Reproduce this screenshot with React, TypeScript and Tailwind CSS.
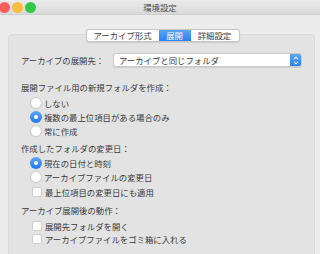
import React from 'react';

const Radio = ({ checked, label }: { checked?: boolean; label: string }) => (
  <div className="flex items-center h-[14px] pl-[9px]">
    {checked ? (
      <div className="w-[12px] h-[12px] rounded-full bg-gradient-to-b from-[#5aa6fa] to-[#1f78f0] flex items-center justify-center">
        <div className="w-[4px] h-[4px] rounded-full bg-white" />
      </div>
    ) : (
      <div className="w-[12px] h-[12px] rounded-full bg-white border border-[#cdcdcd] shadow-[0_0.5px_0.5px_rgba(0,0,0,0.08)]" />
    )}
    <span className="ml-[2px]">{label}</span>
  </div>
);

const Check = ({ label }: { label: string }) => (
  <div className="flex items-center h-[14px] pl-[11px]">
    <div className="w-[10px] h-[10px] rounded-[2px] bg-white border border-[#cdcdcd]" />
    <span className="ml-[3px]">{label}</span>
  </div>
);

export default function App() {
  return (
    <div className="w-[320px] h-[254px] overflow-hidden bg-[#ececec] text-[#3a3a3a] text-[8.4px] leading-[14px] font-['Noto_Sans_CJK_JP','Noto_Sans',sans-serif]">
      {/* title bar */}
      <div className="relative h-[15px] bg-gradient-to-b from-[#ebebeb] to-[#d9d9d9] border-b border-[#cfcfcf] flex items-center">
        <div className="flex items-center gap-[2px] -ml-[1px]">
          <div className="w-[11px] h-[11px] rounded-full bg-[#fc605c]" />
          <div className="w-[11px] h-[11px] rounded-full bg-[#fdbc40]" />
          <div className="w-[11px] h-[11px] rounded-full bg-[#34c84a]" />
        </div>
        <div className="absolute inset-0 flex items-center justify-center text-[#4d4d4d]">環境設定</div>
      </div>

      {/* tabs */}
      <div className="relative z-10 flex justify-center mt-[14px] -mb-[8px] pl-[5px]">
        <div className="flex h-[13px] rounded-[3px] border border-[#c6c6c6] bg-white shadow-[0_0.5px_1px_rgba(0,0,0,0.1)] overflow-hidden leading-[11px]">
          <div className="w-[72px] flex items-center justify-center">アーカイブ形式</div>
          <div className="w-[32px] flex items-center justify-center text-white bg-gradient-to-b from-[#5aa6fa] to-[#2b7ff2]">展開</div>
          <div className="w-[48px] flex items-center justify-center">詳細設定</div>
        </div>
      </div>

      {/* group box */}
      <div className="ml-[8px] mr-[5px] h-[240px] bg-[#e3e3e3] border border-[#dadada] rounded-[4px] pl-[12px] pt-[18px]">
        <div className="flex items-center h-[14px]">
          <span className="w-[92px]">アーカイブの展開先：</span>
          <div className="flex items-center w-[189px] h-[14px] bg-white rounded-[3px] border border-[#cbcbcb] shadow-[0_0.5px_1px_rgba(0,0,0,0.1)] overflow-hidden">
            <span className="flex-1 pl-[5px]">アーカイブと同じフォルダ</span>
            <div className="w-[11px] h-full bg-gradient-to-b from-[#5aa6fa] to-[#2b7ff2] flex items-center justify-center">
              <svg width="6" height="9" viewBox="0 0 6 9" fill="none" stroke="white" strokeWidth="1.1">
                <path d="M1 3.2 L3 1.2 L5 3.2" />
                <path d="M1 5.8 L3 7.8 L5 5.8" />
              </svg>
            </div>
          </div>
        </div>

        <div className="mt-[13px]">展開ファイル用の新規フォルダを作成：</div>
        <div className="mt-[2px]">
          <Radio label="しない" />
          <Radio checked label="複数の最上位項目がある場合のみ" />
          <Radio label="常に作成" />
        </div>

        <div className="mt-[3px]">作成したフォルダの変更日：</div>
        <div className="mt-[1px]">
          <Radio checked label="現在の日付と時刻" />
          <Radio label="アーカイブファイルの変更日" />
          <div className="mt-[1px]">
            <Check label="最上位項目の変更日にも適用" />
          </div>
        </div>

        <div className="mt-[4px]">アーカイブ展開後の動作：</div>
        <div className="mt-[2px]">
          <Check label="展開先フォルダを開く" />
          <div className="mt-[-1px]">
            <Check label="アーカイブファイルをゴミ箱に入れる" />
          </div>
        </div>
      </div>
    </div>
  );
}
